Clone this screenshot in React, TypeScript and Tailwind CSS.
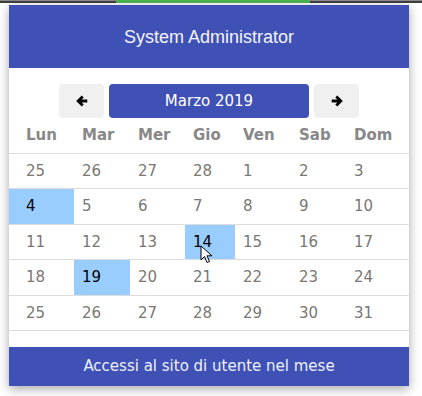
const dayNames = ['Lun', 'Mar', 'Mer', 'Gio', 'Ven', 'Sab', 'Dom'];

const weeks = [
  [25, 26, 27, 28, 1, 2, 3],
  [4, 5, 6, 7, 8, 9, 10],
  [11, 12, 13, 14, 15, 16, 17],
  [18, 19, 20, 21, 22, 23, 24],
  [25, 26, 27, 28, 29, 30, 31],
];

// highlighted days (week index, column index)
const marked = ['1-0', '2-3', '3-1'];

const cols = 'grid grid-cols-[65px_56px_55px_50px_56px_55px_63px]';

function Arrow({ right = false }: { right?: boolean }) {
  return (
    <svg
      width="12"
      height="12"
      viewBox="0 0 10 10"
      className={right ? 'rotate-180' : ''}
    >
      <path
        d="M9.4 5 H2.2 M5.6 1.3 L1.8 5 L5.6 8.7"
        fill="none"
        stroke="#000"
        strokeWidth="2.3"
        strokeLinecap="butt"
        strokeLinejoin="miter"
      />
    </svg>
  );
}

function Cursor() {
  return (
    <svg
      className="absolute left-[200px] top-[245px]"
      width="14"
      height="20"
      viewBox="0 0 14 20"
    >
      <path
        d="M1 1 L1 15 L4.5 11.5 L7 17.5 L9.5 16.5 L7 10.8 L12 10.8 Z"
        fill="#fff"
        stroke="#000"
        strokeWidth="1"
        strokeLinejoin="round"
      />
    </svg>
  );
}

export default function App() {
  return (
    <div className="relative w-[422px] h-[396px] bg-white overflow-hidden font-['DejaVu_Sans',sans-serif]">
      {/* Top strip */}
      <div className="relative h-[3px] border-t border-[#8a8a8a] bg-[#3d3d3d]">
        <div className="absolute left-[116px] top-[-1px] h-[3px] w-[194px] bg-[#4caf50]" />
      </div>

      {/* Card */}
      <div className="ml-[9px] mt-[2px] w-[400px] bg-white shadow-[0_3px_10px_rgba(0,0,0,0.35)]">
        <div className="h-[63px] pt-[2px] bg-[#3f51b5] flex items-center justify-center text-[18px] text-[#f4f4ff] font-['Liberation_Sans',Arial,sans-serif]">
          System Administrator
        </div>

        {/* Month navigation */}
        <div className="pt-[16px] flex justify-center gap-[5px]">
          <button className="w-[45px] h-[34px] rounded-[4px] bg-[#f0f0f0] flex items-center justify-center">
            <Arrow />
          </button>
          <button className="w-[200px] h-[34px] rounded-[4px] bg-[#3f51b5] text-white text-[15px]">
            Marzo 2019
          </button>
          <button className="w-[45px] h-[34px] rounded-[4px] bg-[#f0f0f0] flex items-center justify-center">
            <Arrow right />
          </button>
        </div>

        {/* Day names */}
        <div className={`${cols} h-[36px] border-b border-[#dddddd] items-center text-[15px] font-bold text-[#888]`}>
          {dayNames.map((d, i) => (
            <div key={d} className={i === 0 ? 'pl-[17px]' : 'pl-[8px]'}>
              {d}
            </div>
          ))}
        </div>

        {/* Weeks */}
        {weeks.map((week, w) => (
          <div key={w} className={`${cols} h-[35.4px] border-b border-[#dddddd] text-[15px]`}>
            {week.map((day, i) => {
              const on = marked.includes(`${w}-${i}`);
              return (
                <div
                  key={i}
                  className={`flex items-center ${i === 0 ? 'pl-[17px]' : 'pl-[8px]'} ${
                    on ? 'bg-[#99ccff] text-black' : 'text-[#7a7774]'
                  }`}
                >
                  {day}
                </div>
              );
            })}
          </div>
        ))}

        <div className="h-[16px]" />

        {/* Footer */}
        <div className="h-[39px] bg-[#3f51b5] flex items-center justify-center text-[15px] text-[#eef0ff]">
          Accessi al sito di utente nel mese
        </div>
      </div>

      <Cursor />
    </div>
  );
}
